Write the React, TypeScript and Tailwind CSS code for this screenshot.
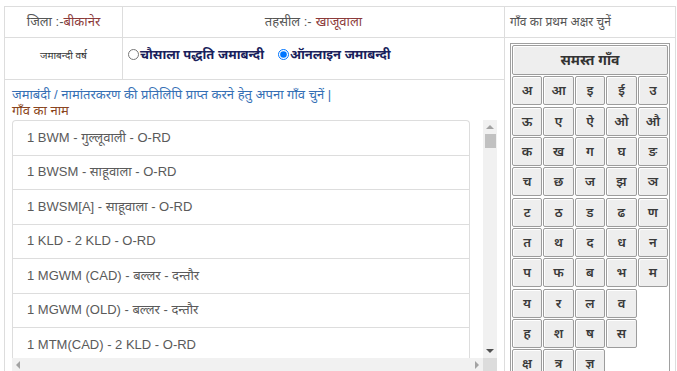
const letterRows: string[][] = [
  ["अ", "आ", "इ", "ई", "उ"],
  ["ऊ", "ए", "ऐ", "ओ", "औ"],
  ["क", "ख", "ग", "घ", "ङ"],
  ["च", "छ", "ज", "झ", "ञ"],
  ["ट", "ठ", "ड", "ढ", "ण"],
  ["त", "थ", "द", "ध", "न"],
  ["प", "फ", "ब", "भ", "म"],
  ["य", "र", "ल", "व"],
  ["ह", "श", "ष", "स"],
  ["क्ष", "त्र", "ज्ञ"],
];

const villages = [
  "1 BWM - गुल्लूवाली - O-RD",
  "1 BWSM - साहूवाला - O-RD",
  "1 BWSM[A] - साहूवाला - O-RD",
  "1 KLD - 2 KLD - O-RD",
  "1 MGWM (CAD) - बल्लर - दन्तौर",
  "1 MGWM (OLD) - बल्लर - दन्तौर",
  "1 MTM(CAD) - 2 KLD - O-RD",
];

function LetterButton({ label }: { label: string }) {
  return (
    <button
      type="button"
      className="h-[29px] border border-[#9c9c9c] bg-[#eeeeee] rounded-[2px] shadow-[inset_1px_1px_0_#ffffff] text-[13px] font-semibold text-[#3a3a3a] leading-none"
    >
      {label}
    </button>
  );
}

function Arrow({ dir, color }: { dir: "up" | "down" | "left" | "right"; color: string }) {
  const pts = {
    up: "0,5 4,1 8,5",
    down: "0,1 8,1 4,5",
    left: "5,0 5,8 1,4",
    right: "1,0 1,8 5,4",
  }[dir];
  const w = dir === "up" || dir === "down" ? 8 : 6;
  const h = dir === "up" || dir === "down" ? 6 : 8;
  return (
    <svg width={w} height={h} viewBox={`0 0 ${w} ${h}`}>
      <polygon points={pts} fill={color} />
    </svg>
  );
}

export default function App() {
  return (
    <div className="w-[677px] h-[371px] overflow-hidden bg-white pt-[6px] pl-[4px] font-['Liberation_Sans','Noto_Sans',sans-serif]">
      <div className="flex w-[672px] h-[400px] border-t border-l border-[#dddddd]">
        {/* left part */}
        <div className="w-[500px] flex flex-col border-r border-[#dddddd]">
          <div className="flex h-[31px] border-b border-[#dddddd] text-[13px]">
            <div className="w-[118px] border-r border-[#dddddd] flex items-center justify-center text-[#555]">
              जिला :-<span className="text-[#8b3a3a]">बीकानेर</span>
            </div>
            <div className="flex-1 flex items-center justify-center text-[#555]">
              तहसील :- <span className="text-[#8b3a3a] ml-1">खाजूवाला</span>
            </div>
          </div>
          <div className="flex h-[42px] border-b border-[#dddddd]">
            <div className="w-[118px] border-r border-[#dddddd] flex justify-center pt-[10px] text-[10px] text-[#333]">
              जमाबन्दी वर्ष
            </div>
            <div className="flex-1 flex items-start pt-[7px] pl-[5px] gap-[14px] text-[13px] font-bold text-[#1a1f5c]">
              <label className="flex items-center">
                <input type="radio" name="jmb" className="w-[11px] h-[11px] m-0 mr-[1px]" />
                चौसाला पद्धति जमाबन्दी
              </label>
              <label className="flex items-center">
                <input type="radio" name="jmb" defaultChecked className="w-[11px] h-[11px] m-0 mr-[1px]" />
                ऑनलाइन जमाबन्दी
              </label>
            </div>
          </div>
          <div className="pl-[7px] pt-[7px] text-[13px] leading-[16px]">
            <div className="text-[#3670b5]">जमाबंदी / नामांतरकरण की प्रतिलिपि प्राप्त करने हेतु अपना गाँव चुनें |</div>
            <div className="text-[#8a4520]">गाँव का नाम</div>
            <div className="mt-[1px] w-[485px] flex flex-col">
              <div className="flex h-[238px]">
                <div className="flex-1 overflow-hidden">
                  <ul className="w-[458px]">
                    {villages.map((v, i) => (
                      <li
                        key={v}
                        className={`h-[34.5px] flex items-center pl-[14px] border border-b-0 border-[#dddddd] text-[13px] text-[#5a5a5a] ${
                          i === 0 ? "rounded-t-[4px]" : ""
                        }`}
                      >
                        {v}
                      </li>
                    ))}
                  </ul>
                </div>
                <div className="w-[14px] bg-[#f1f1f1] flex flex-col items-center">
                  <div className="h-[14px] flex items-center justify-center">
                    <Arrow dir="up" color="#a3a3a3" />
                  </div>
                  <div className="w-[11px] h-[14px] bg-[#c1c1c1]" />
                  <div className="flex-1" />
                  <div className="h-[14px] flex items-center justify-center">
                    <Arrow dir="down" color="#505050" />
                  </div>
                </div>
              </div>
              <div className="flex h-[14px]">
                <div className="flex-1 bg-[#f1f1f1] flex items-center justify-between px-[3px]">
                  <Arrow dir="left" color="#a3a3a3" />
                  <Arrow dir="right" color="#a3a3a3" />
                </div>
                <div className="w-[14px] bg-[#dcdcdc]" />
              </div>
            </div>
          </div>
        </div>
        {/* right part */}
        <div className="w-[171px] flex flex-col border-r border-[#dddddd]">
          <div className="h-[31px] border-b border-[#dddddd] flex items-center pl-[5px] text-[12px] text-[#555]">
            गाँव का प्रथम अक्षर चुनें
          </div>
          <div className="pt-[5px] pl-[5px]">
            <div className="w-[160px] border border-[#a0a0a0] p-[1px] flex flex-col gap-y-[1.33px]">
              <button
                type="button"
                className="h-[30px] w-[156px] border border-[#9c9c9c] bg-[#eeeeee] rounded-[2px] shadow-[inset_1px_1px_0_#ffffff] text-[14px] font-bold text-[#333]"
              >
                समस्त गाँव
              </button>
              {letterRows.map((row, r) => (
                <div key={r} className="grid grid-cols-5 gap-x-[1.25px] w-[156px]">
                  {row.map((l) => (
                    <LetterButton key={l} label={l} />
                  ))}
                </div>
              ))}
            </div>
          </div>
        </div>
      </div>
    </div>
  );
}
